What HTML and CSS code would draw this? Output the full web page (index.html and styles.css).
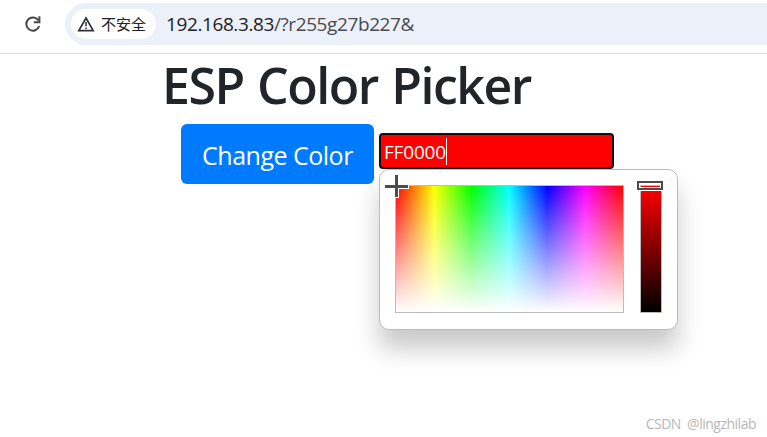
FILE: index.html
```html
<!DOCTYPE html>
<html lang="en">
<head>
<meta charset="utf-8">
<title>ESP Color Picker</title>
<link rel="stylesheet" href="styles.css">
</head>
<body>
<header class="toolbar">
  <svg class="reload" width="18" height="18" viewBox="0 0 18 18"><path d="M14.4 5.4A6.6 6.6 0 1 0 15.2 11" fill="none" stroke="#46484b" stroke-width="2"/><path d="M16.4 1.3v6.9H9.8V6.2H14.4V1.3z" fill="#46484b"/></svg>
  <div class="omnibox">
    <div class="chip">
      <svg width="18" height="16" viewBox="0 0 18 16"><path d="M9 2L16.2 14.7H1.8Z" fill="none" stroke="#303236" stroke-width="1.7"/><path d="M9 6v4.3M9 11.4v1.7" stroke="#303236" stroke-width="1.5"/></svg>
      <span class="chip-text">不安全</span>
    </div>
    <div class="url">192.168.3.83<span class="path">/?r255g27b227&amp;</span></div>
  </div>
</header>
<main class="page">
  <h1 class="title">ESP Color Picker</h1>
  <div class="controls">
    <button class="button">Change Color</button>
    <div class="field">
      <span class="value">FF0000</span><span class="caret"></span>
      <div class="picker">
        <div class="spectrum">
          <svg class="cross" width="24" height="24" viewBox="0 0 24 24"><path d="M11.5 0v23M0 11.5h24" stroke="#fff" stroke-width="5"/><path d="M11.5 0v22M0 11.5h23" stroke="#4c4c4c" stroke-width="3"/></svg>
        </div>
        <div class="slider"><span class="thumb"></span></div>
      </div>
    </div>
  </div>
</main>
<footer class="watermark">CSDN&nbsp; @lingzhilab</footer>
</body>
</html>
```
FILE: styles.css
```css
* { box-sizing: border-box; }
body {
  margin: 0;
  height: 437px;
  overflow: hidden;
  display: flex;
  flex-direction: column;
  background: #fff;
  color: #212529;
  font-family: "Open Sans", "Noto Sans", sans-serif;
}
.toolbar {
  display: flex;
  flex: none;
  height: 54px;
  padding: 3px 0 0 24px;
  border-bottom: 1px solid #dedfe1;
}
.reload { margin: 12px 23px 0 0; flex: none; }
.omnibox {
  display: flex;
  align-items: center;
  flex: 1;
  height: 42px;
  padding-left: 6px;
  background: #ecf0f9;
  border-radius: 21px 0 0 21px;
}
.chip {
  display: flex;
  align-items: center;
  gap: 6px;
  width: 85px;
  height: 30px;
  padding-left: 6px;
  background: #fff;
  border-radius: 15px;
}
.chip-text {
  font: 15px/30px "Noto Sans CJK SC", sans-serif;
  color: #202124;
  white-space: nowrap;
}
.url {
  margin-left: 10px;
  font-size: 19px;
  letter-spacing: -0.4px;
  line-height: 42px;
  color: #202124;
}
.path { color: #494b4f; }
.page { flex: 1; padding-left: 162px; }
.title {
  margin: 0;
  height: 70px;
  font-size: 50px;
  font-weight: 600;
  letter-spacing: -1.5px;
  word-spacing: 2px;
  line-height: 63px;
  white-space: nowrap;
}
.controls { display: flex; padding-left: 19px; gap: 5px; }
.button {
  width: 193px;
  height: 60px;
  padding: 2px 0 0;
  border: 0;
  border-radius: 6px;
  background: #007bff;
  color: #fff;
  font: 25px/58px "Open Sans", sans-serif;
  letter-spacing: -0.5px;
  white-space: nowrap;
}
.field {
  position: relative;
  display: flex;
  align-items: center;
  width: 235px;
  height: 36px;
  margin-top: 9px;
  padding-left: 3px;
  border: 2px solid #101010;
  border-radius: 4px;
  background: #f00;
  color: #fff;
}
.value { padding-top: 1px; font-size: 19px; letter-spacing: -0.2px; }
.caret { width: 1px; height: 27px; background: #fff; }
.picker {
  position: absolute;
  left: -2px;
  top: 34px;
  display: flex;
  gap: 16px;
  width: 299px;
  height: 161px;
  padding: 15px;
  border: 1px solid #bbb;
  border-radius: 10px;
  background: #fff;
  box-shadow: 0 19px 24px rgba(0, 0, 0, .21);
}
.spectrum {
  position: relative;
  width: 229px;
  height: 128px;
  border: 1px solid #bbb;
  background: linear-gradient(transparent, #fff), linear-gradient(90deg, #f00, #ff0, #0f0, #0ff, #00f, #f0f, #f00);
}
.cross { position: absolute; left: -11px; top: -11px; }
.slider {
  position: relative;
  width: 22px;
  height: 128px;
  border: 1px solid #bbb;
  background: linear-gradient(#f00, #000);
}
.thumb {
  position: absolute;
  left: -4px;
  top: -5px;
  width: 26px;
  height: 9px;
  border: 2px solid #4c4c4c;
  box-shadow: inset 0 0 0 1px #fff, 0 1px 0 #fff;
}
.watermark {
  align-self: flex-end;
  height: 27px;
  margin-right: 11px;
  font: 14px/28px "Open Sans", sans-serif;
  letter-spacing: -0.5px;
  color: #b8b8b8;
}
```
